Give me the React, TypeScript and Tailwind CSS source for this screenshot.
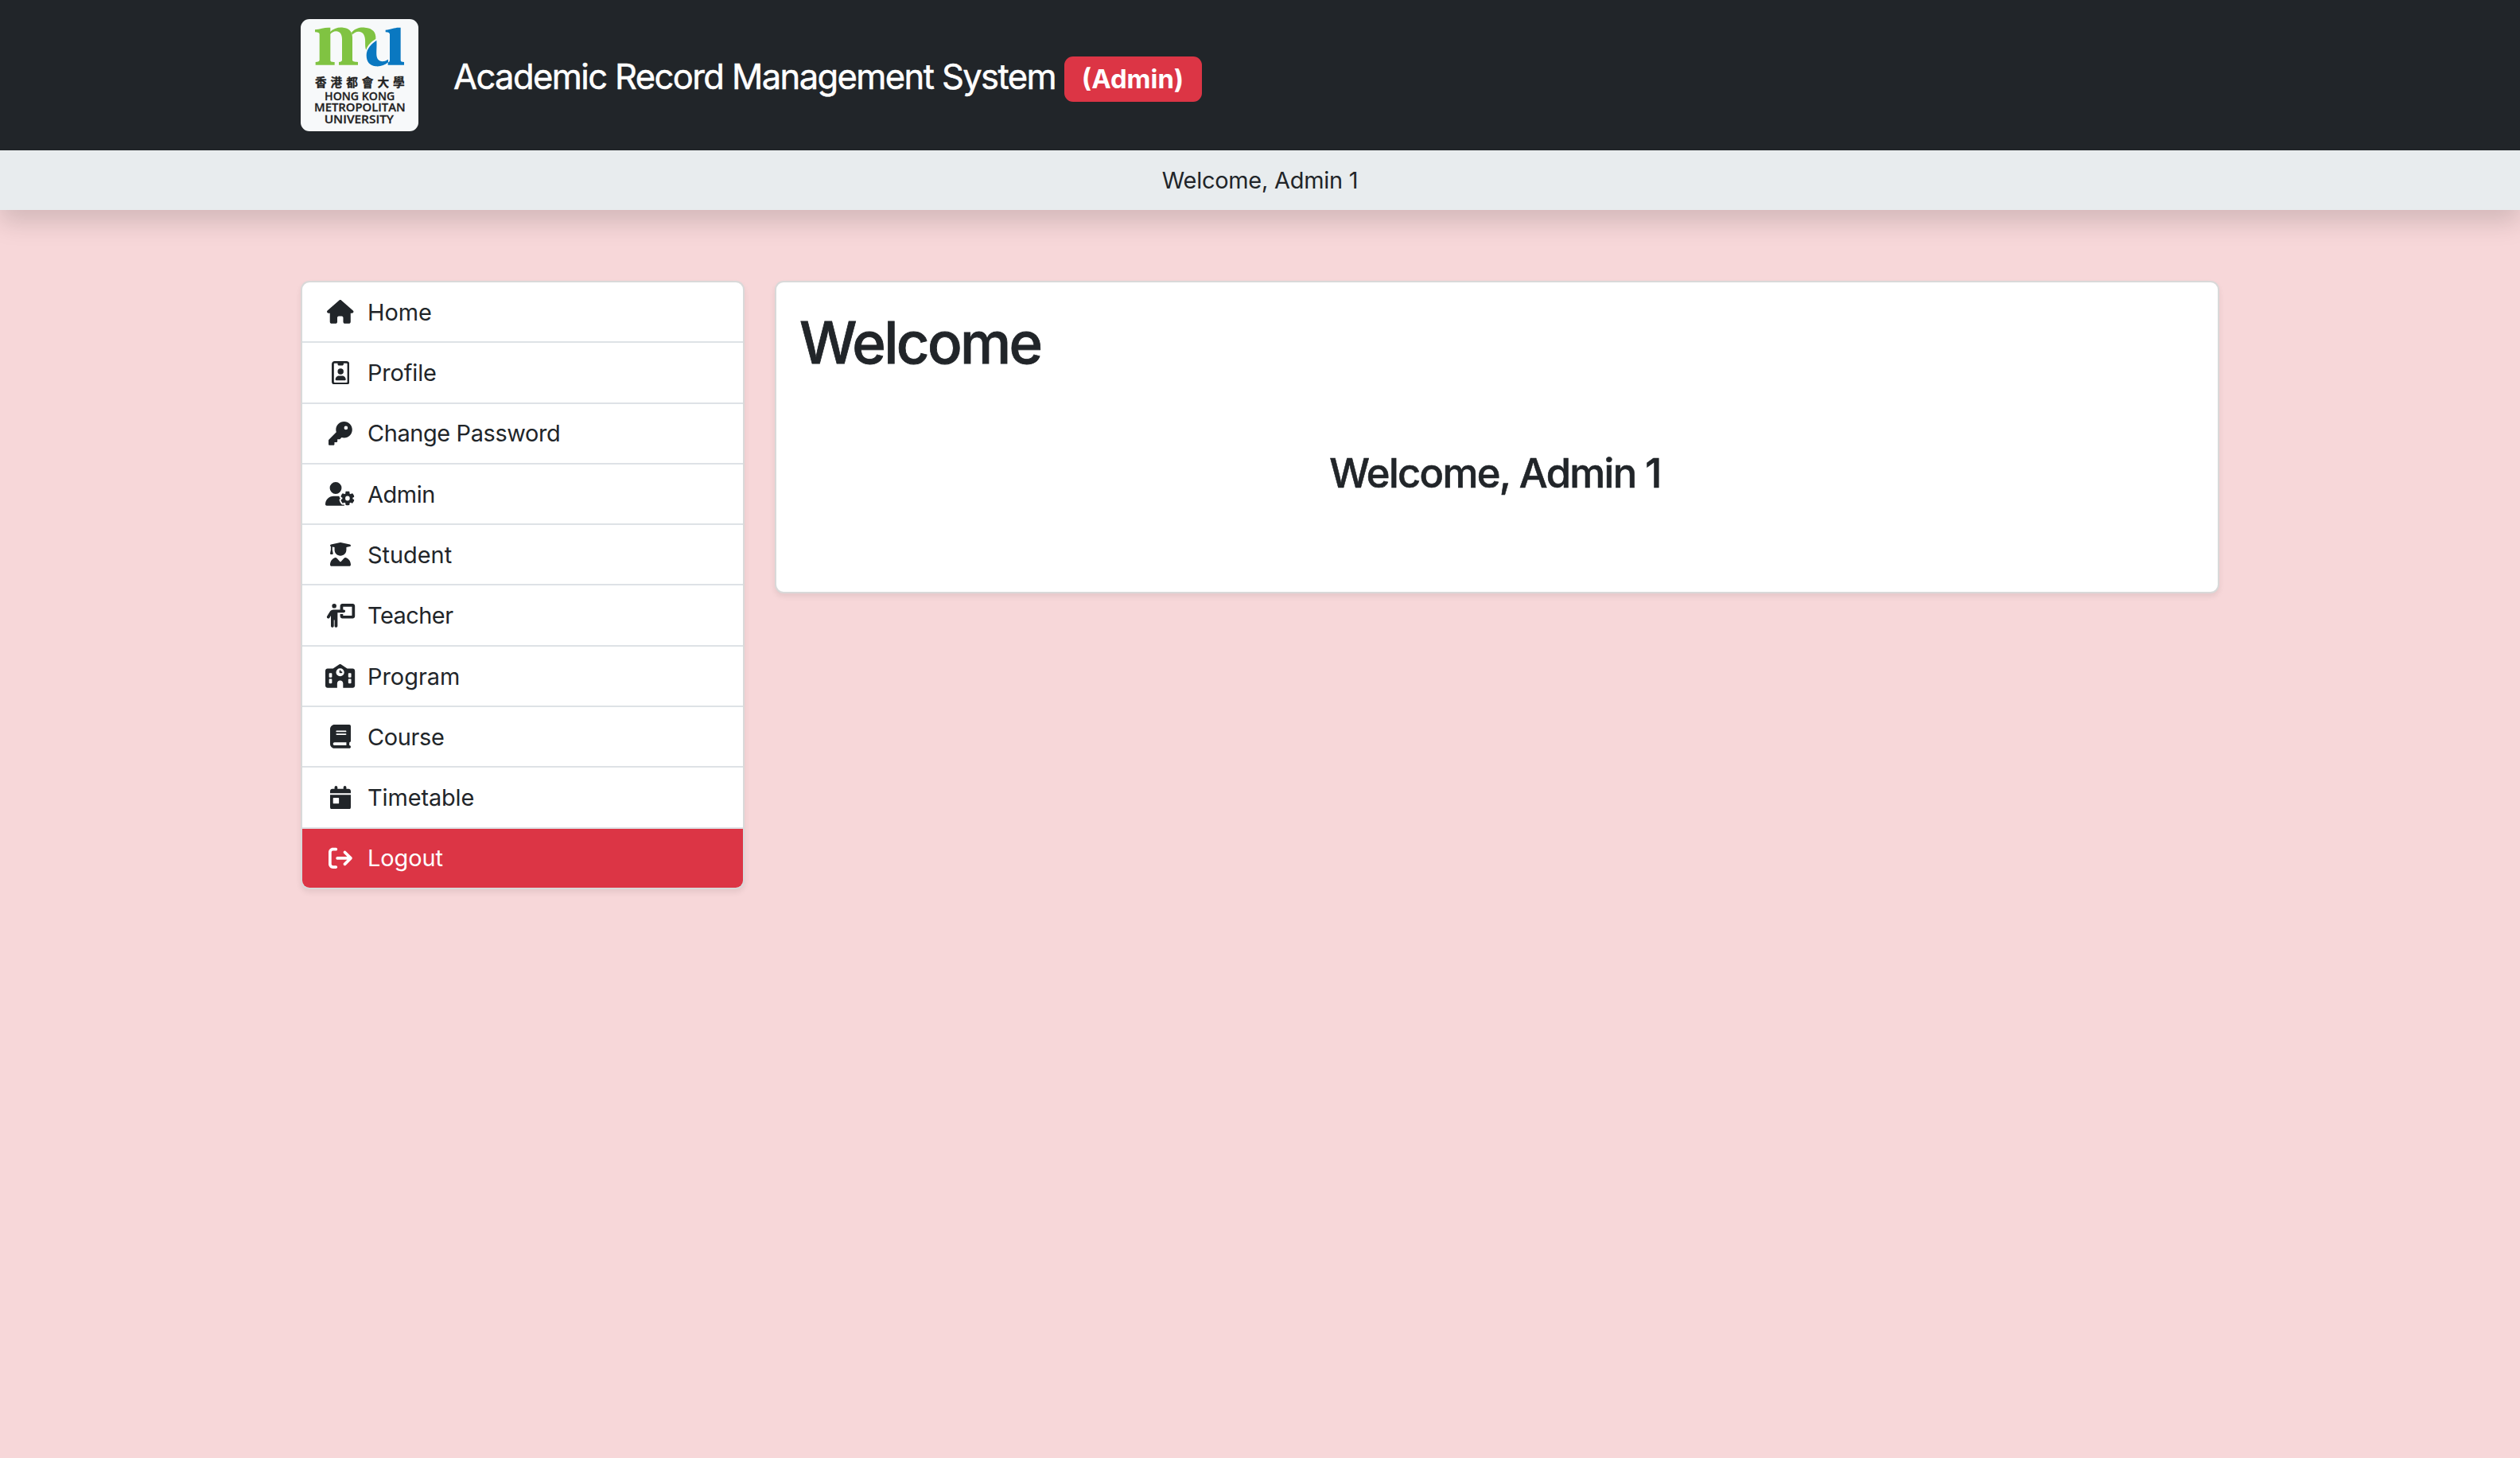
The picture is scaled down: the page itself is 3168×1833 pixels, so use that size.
import React from "react";
import type { IconType } from "react-icons";
import {
  FaHouse,
  FaRegIdBadge,
  FaKey,
  FaUserGear,
  FaUserGraduate,
  FaPersonChalkboard,
  FaSchool,
  FaBook,
  FaCalendarDay,
  FaArrowRightFromBracket,
} from "react-icons/fa6";

type Item = { label: string; icon: IconType; width: string; tracking: string };

const items: Item[] = [
  { label: "Home", icon: FaHouse, width: "w-[33.5px]", tracking: "tracking-normal" },
  { label: "Profile", icon: FaRegIdBadge, width: "w-[22.4px]", tracking: "tracking-[-0.14px]" },
  { label: "Change Password", icon: FaKey, width: "w-[29.8px]", tracking: "tracking-[-0.37px]" },
  { label: "Admin", icon: FaUserGear, width: "w-[37.2px]", tracking: "tracking-[-0.4px]" },
  { label: "Student", icon: FaUserGraduate, width: "w-[26px]", tracking: "tracking-normal" },
  { label: "Teacher", icon: FaPersonChalkboard, width: "w-[37.2px]", tracking: "tracking-[-0.5px]" },
  { label: "Program", icon: FaSchool, width: "w-[37.2px]", tracking: "tracking-normal" },
  { label: "Course", icon: FaBook, width: "w-[26px]", tracking: "tracking-[-0.33px]" },
  { label: "Timetable", icon: FaCalendarDay, width: "w-[26px]", tracking: "tracking-[-0.1px]" },
  { label: "Logout", icon: FaArrowRightFromBracket, width: "w-[29.8px]", tracking: "tracking-[-0.06px]" },
];

function Logo() {
  return (
    <svg
      viewBox="54 42 444 423"
      className="h-[141px] w-[148px] shrink-0 rounded-[11px] bg-[#f7f9fa]"
      role="img"
      aria-label="Hong Kong Metropolitan University"
    >
      <g fill="#80c342">
        <path d="M108 82 C128 80 142 74 158 74 L166 74 L166 197 C166 202 170 203 182 204 L182 215 L110 215 L110 204 C120 203 125 202 125 196 L125 99 C125 93 119 92 108 91 Z" />
        <path d="M163 92 C178 77 196 72 214 74 C239 77 249 90 249 112 L249 196 C249 202 256 203 270 204 L270 215 L198 215 L198 204 C206 203 210 202 210 196 L210 118 C210 98 201 89 188 88 C178 88 171 93 163 101 Z" />
        <path d="M246 92 C260 77 278 72 296 74 C326 76 339 92 337 117 C322 126 306 140 301 158 C296 149 298 132 297 119 C296 99 286 89 273 89 C262 89 255 94 248 101 Z" />
      </g>
      <path
        fill="#0a78c1"
        d="M340 122 C342 145 338 168 341 184 C345 203 364 207 384 194 L384 205 C371 217 353 222 336 220 C313 217 302 203 302 178 C302 153 322 135 340 122 Z M374 83 C394 81 407 74 423 74 L431 74 L431 196 C431 203 435 204 444 204 L444 215 L383 215 L383 206 C388 204 390 202 390 196 L390 100 C390 94 385 92 374 91 Z"
      />
      <g
        fill="#222222"
        stroke="#222222"
        strokeWidth="0.8"
        className="font-['Open_Sans','Noto_Sans',sans-serif] font-semibold"
      >
        <text
          x="108"
          y="298"
          fontSize="44"
          textLength="338"
          lengthAdjust="spacing"
          className="font-['Noto_Sans_CJK_TC',sans-serif] font-bold"
        >
          香港都會大學
        </text>
        <text x="144" y="348" fontSize="42" textLength="265" lengthAdjust="spacingAndGlyphs">
          HONG KONG
        </text>
        <text x="105" y="391" fontSize="42" textLength="344" lengthAdjust="spacingAndGlyphs">
          METROPOLITAN
        </text>
        <text x="143" y="434" fontSize="42" textLength="262" lengthAdjust="spacingAndGlyphs">
          UNIVERSITY
        </text>
      </g>
    </svg>
  );
}

function Header() {
  return (
    <header className="shadow-[0_15px_30px_rgba(0,0,0,0.15)]">
      <div className="h-[189px] bg-[#212529]">
        <div className="mx-auto flex h-full w-[2412px] items-center">
          <Logo />
          <div className="ml-11 flex items-center text-[43.5px] leading-none whitespace-nowrap text-white">
            <span className="relative top-0.5 w-[767.5px] tracking-[-1.6px] [-webkit-text-stroke:0.5px]">
              Academic Record Management System
            </span>
            <span className="relative top-[5px] flex h-[57px] w-[173px] items-center justify-center rounded-[11px] bg-[#dc3545] text-[32.8px] font-bold">
              (Admin)
            </span>
          </div>
        </div>
      </div>
      <div className="flex h-[74.5px] items-center justify-center bg-[#e8ecee] pt-0.5 tracking-[-0.23px]">
        Welcome, Admin 1
      </div>
    </header>
  );
}

function Sidebar() {
  return (
    <nav className="flex w-[558px] shrink-0 flex-col overflow-hidden rounded-[11px] border-2 border-black/15 bg-white shadow-[0_4px_7px_rgba(0,0,0,0.075)]">
      {items.map(({ label, icon: Icon, width, tracking }, i) => {
        const last = i === items.length - 1;
        return (
          <a
            key={label}
            className={
              last
                ? "flex h-[74px] items-center bg-[#dc3545] pr-4 pl-[29px] text-white"
                : "flex h-[76.3px] items-center border-b-2 border-[#dee2e6] pr-4 pl-[29px]"
            }
          >
            <span className="flex w-[38px] shrink-0 justify-center">
              <Icon className={`h-[29.8px] shrink-0 ${width}`} />
            </span>
            <span className={`ml-[15px] pt-0.5 ${tracking}`}>{label}</span>
          </a>
        );
      })}
    </nav>
  );
}

export default function App() {
  return (
    <div className="min-h-[1833px] bg-[#f7d7d9] font-[Inter,sans-serif] text-[28.9px] leading-[44.7px] text-[#212529]">
      <Header />
      <main className="mx-auto mt-[89.5px] flex w-[2412px] items-start gap-[38px]">
        <Sidebar />
        <section className="h-[393px] flex-1 rounded-[11px] border-2 border-black/15 bg-white px-[29px] pt-[31px] shadow-[0_4px_7px_rgba(0,0,0,0.075)]">
          <h1 className="text-[72.3px] leading-[89px] font-medium tracking-[-2.6px] [-webkit-text-stroke:0.8px]">
            Welcome
          </h1>
          <h2 className="mt-[89px] pr-[5px] text-center text-[50.6px] leading-[62px] font-medium tracking-[-1.65px] [-webkit-text-stroke:0.6px]">
            Welcome, Admin 1
          </h2>
        </section>
      </main>
    </div>
  );
}
